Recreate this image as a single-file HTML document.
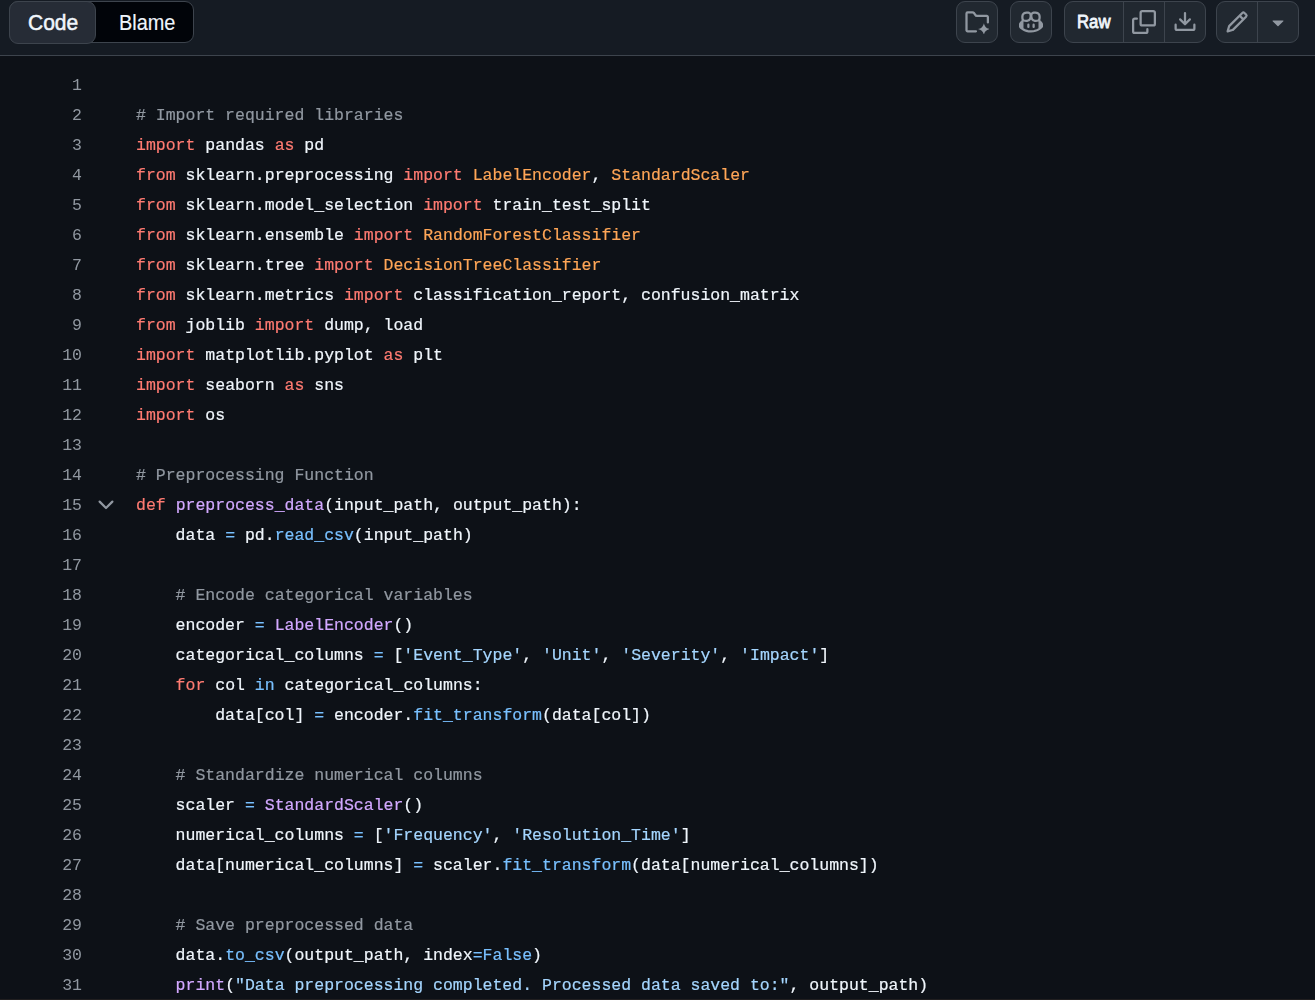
<!DOCTYPE html>
<html><head><meta charset="utf-8">
<style>
html,body{margin:0;padding:0;}
body{width:1315px;height:1000px;overflow:hidden;background:#0d1117;position:relative;font-family:"Liberation Sans",sans-serif;}
.hdr{position:absolute;left:0;top:0;width:1315px;height:55px;background:#151b23;}
.hline{position:absolute;left:0;top:55px;width:1315px;height:1px;background:#3d444d;}
.seg{position:absolute;left:9px;top:1px;width:183px;height:40px;border:1px solid #3d444d;border-radius:9px;background:#010409;}
.segcode{position:absolute;left:9px;top:1px;width:85px;height:41px;border:1px solid #3d444d;border-radius:9px;background:#262c36;box-sizing:border-box;width:87px;height:43px;}
.lbl{position:absolute;color:#f0f6fc;font-size:20px;line-height:20px;white-space:nowrap;}
.btn{position:absolute;top:1px;height:42px;border:1px solid #3d444d;border-radius:9px;background:#212830;box-sizing:border-box;}
.div{position:absolute;top:1px;width:1px;height:42px;background:#3d444d;}
svg{position:absolute;fill:#9198a1;}
.code{position:absolute;left:0;top:71px;font-family:"Liberation Mono",monospace;font-size:16.5px;line-height:30px;color:#f0f6fc;white-space:pre;}
.nums{position:absolute;left:0;width:82px;top:71px;font-family:"Liberation Mono",monospace;font-size:16.5px;line-height:30px;color:#9198a1;text-align:right;}
.codetxt{position:absolute;left:136px;top:71px;font-family:"Liberation Mono",monospace;font-size:16.5px;line-height:30px;color:#f0f6fc;}
.ln,.nr{height:30px;white-space:pre;}
.codetxt,.nums{will-change:transform;-webkit-font-smoothing:antialiased;}
.codetxt span,.codetxt .ln{-webkit-text-stroke:0.2px currentColor;}
.k{color:#ff7b72}.f{color:#d2a8ff}.c{color:#79c0ff}.s{color:#a5d6ff}.o{color:#ffa657}.m{color:#9198a1}
</style></head><body>
<div class="hdr"></div>
<div class="hline"></div>
<div class="seg"></div>
<div class="segcode"></div>
<div class="lbl" style="left:28px;top:13px;font-size:22px;-webkit-text-stroke:0.5px #f0f6fc;transform:scaleX(0.955);transform-origin:0 0;">Code</div>
<div class="lbl" style="left:119px;top:13px;font-size:22px;-webkit-text-stroke:0.15px #f0f6fc;transform:scaleX(0.905);transform-origin:0 0;">Blame</div>

<div class="btn" style="left:956px;width:42px;"></div>
<svg style="left:965px;top:10px" width="24" height="24" viewBox="0 0 16 16"><path fill="none" stroke="#9198a1" stroke-width="1.5" stroke-linecap="round" stroke-linejoin="round" d="M7.3 14.2H1.75a.75.75 0 0 1-.75-.75V2.3a.75.75 0 0 1 .75-.75H5Q5.6 1.55 5.95 2L6.75 3.1Q7.2 3.95 7.9 3.95H14.5a.75.75 0 0 1 .75.75V8.3"/><path d="M12.60 8.75Q13.22 12.03 16.50 12.65Q13.22 13.27 12.60 16.55Q11.98 13.27 8.70 12.65Q11.98 12.03 12.60 8.75Z"/></svg>

<div class="btn" style="left:1010px;width:42px;"></div>
<svg style="left:1019px;top:10px" width="24" height="24" viewBox="0 0 16 16"><path d="M7.998 15.035c-4.562 0-7.873-2.914-7.998-3.749V9.338c.085-.628.677-1.686 1.588-2.065.013-.07.024-.143.036-.218.029-.183.06-.384.126-.612-.201-.508-.254-1.084-.254-1.656 0-.87.128-1.769.693-2.484.579-.733 1.494-1.124 2.724-1.261 1.206-.134 2.262.034 2.944.765.05.053.096.108.139.165.044-.057.094-.112.143-.165.682-.731 1.738-.899 2.944-.765 1.230.137 2.145.528 2.724 1.261.566.715.693 1.614.693 2.484 0 .572-.053 1.148-.254 1.656.066.228.098.429.126.612.012.076.024.148.037.218.924.385 1.522 1.471 1.591 2.095v1.872c0 .766-3.351 3.795-8.002 3.795Zm0-1.485c2.28 0 4.584-1.11 5.002-1.433V7.862l-.023-.116c-.49.21-1.075.291-1.727.291-1.146 0-2.059-.327-2.710-.991A3.222 3.222 0 0 1 8 6.303a3.24 3.24 0 0 1-.544.743c-.65.664-1.563.991-2.710.991-.652 0-1.236-.081-1.727-.291l-.023.116v4.255c.419.323 2.722 1.433 5.002 1.433ZM6.762 2.83c-.193-.206-.637-.413-1.682-.297-1.019.113-1.479.404-1.713.7-.247.312-.369.789-.369 1.554 0 .793.129 1.171.308 1.371.162.181.519.379 1.442.379.853 0 1.339-.235 1.638-.54.315-.322.527-.827.617-1.553.117-.935-.037-1.395-.241-1.614Zm4.155-.297c-1.044-.116-1.488.091-1.681.297-.204.219-.359.679-.242 1.614.091.726.303 1.231.618 1.553.299.305.784.54 1.638.54.922 0 1.280-.198 1.442-.379.179-.2.308-.578.308-1.371 0-.765-.123-1.242-.370-1.554-.233-.296-.693-.587-1.713-.7Z"/><path d="M6.25 9.037a.75.75 0 0 1 .75.75v1.501a.75.75 0 0 1-1.5 0V9.787a.75.75 0 0 1 .75-.75Zm4.25.75v1.501a.75.75 0 0 1-1.5 0V9.787a.75.75 0 0 1 1.5 0Z"/></svg>

<div class="btn" style="left:1064px;width:142px;"></div>
<div class="div" style="left:1123px;"></div>
<div class="div" style="left:1164px;"></div>
<div class="lbl" style="left:1077px;top:12px;font-size:18px;-webkit-text-stroke:0.8px #f0f6fc;transform:scaleX(0.93);transform-origin:0 0;">Raw</div>
<svg style="left:1132px;top:10px" width="24" height="24" viewBox="0 0 16 16"><path d="M0 6.75C0 5.784.784 5 1.75 5h1.5a.75.75 0 0 1 0 1.5h-1.5a.25.25 0 0 0-.25.25v7.5c0 .138.112.25.25.25h7.5a.25.25 0 0 0 .25-.25v-1.5a.75.75 0 0 1 1.5 0v1.5A1.75 1.75 0 0 1 9.25 16h-7.5A1.75 1.75 0 0 1 0 14.25Z"/><path d="M5 1.75C5 .784 5.784 0 6.75 0h7.5C15.216 0 16 .784 16 1.75v7.5A1.75 1.75 0 0 1 14.25 11h-7.5A1.75 1.75 0 0 1 5 9.25Zm1.75-.25a.25.25 0 0 0-.25.25v7.5c0 .138.112.25.25.25h7.5a.25.25 0 0 0 .25-.25v-7.5a.25.25 0 0 0-.25-.25Z"/></svg>
<svg style="left:1173px;top:10px" width="24" height="24" viewBox="0 0 16 16"><path d="M2.75 14A1.75 1.75 0 0 1 1 12.25v-2.5a.75.75 0 0 1 1.5 0v2.5c0 .138.112.25.25.25h10.5a.25.25 0 0 0 .25-.25v-2.5a.75.75 0 0 1 1.5 0v2.5A1.75 1.75 0 0 1 13.25 14Z"/><path d="M7.25 7.689V2a.75.75 0 0 1 1.5 0v5.689l1.97-1.969a.749.749 0 1 1 1.06 1.060l-3.25 3.250a.749.749 0 0 1-1.060 0L4.220 6.780a.749.749 0 1 1 1.060-1.060l1.970 1.969Z"/></svg>

<div class="btn" style="left:1216px;width:83px;"></div>
<div class="div" style="left:1257px;"></div>
<svg style="left:1225px;top:10px" width="24" height="24" viewBox="0 0 16 16"><path d="M11.013 1.427a1.75 1.75 0 0 1 2.474 0l1.086 1.086a1.75 1.75 0 0 1 0 2.474l-8.61 8.61c-.21.21-.47.364-.756.445l-3.251.93a.75.75 0 0 1-.927-.928l.929-3.25c.081-.286.235-.547.445-.758l8.61-8.61Zm.176 4.823L9.75 4.81l-6.286 6.287a.253.253 0 0 0-.064.108l-.558 1.953 1.953-.558a.253.253 0 0 0 .108-.064Zm1.238-3.763a.25.25 0 0 0-.354 0L10.811 3.75l1.439 1.44 1.263-1.263a.25.25 0 0 0 0-.354Z"/></svg>
<svg style="left:1266px;top:10px" width="24" height="24" viewBox="0 0 16 16"><path d="m4.427 7.427 3.396 3.396a.25.25 0 0 0 .354 0l3.396-3.396A.25.25 0 0 0 11.396 7H4.604a.25.25 0 0 0-.177.427Z"/></svg>

<div class="nums">
<div class="nr">1</div>
<div class="nr">2</div>
<div class="nr">3</div>
<div class="nr">4</div>
<div class="nr">5</div>
<div class="nr">6</div>
<div class="nr">7</div>
<div class="nr">8</div>
<div class="nr">9</div>
<div class="nr">10</div>
<div class="nr">11</div>
<div class="nr">12</div>
<div class="nr">13</div>
<div class="nr">14</div>
<div class="nr">15</div>
<div class="nr">16</div>
<div class="nr">17</div>
<div class="nr">18</div>
<div class="nr">19</div>
<div class="nr">20</div>
<div class="nr">21</div>
<div class="nr">22</div>
<div class="nr">23</div>
<div class="nr">24</div>
<div class="nr">25</div>
<div class="nr">26</div>
<div class="nr">27</div>
<div class="nr">28</div>
<div class="nr">29</div>
<div class="nr">30</div>
<div class="nr">31</div>
</div>
<svg style="left:94px;top:493px" width="24" height="24" viewBox="0 0 16 16"><path d="M12.78 5.22a.749.749 0 0 1 0 1.060l-4.25 4.25a.749.749 0 0 1-1.060 0L3.220 6.280a.749.749 0 1 1 1.060-1.060L8 8.939l3.720-3.720a.749.749 0 0 1 1.060 0Z"/></svg>
<div class="codetxt">
<div class="ln"></div>
<div class="ln"><span class="m"># Import required libraries</span></div>
<div class="ln"><span class="k">import</span> pandas <span class="k">as</span> pd</div>
<div class="ln"><span class="k">from</span> sklearn.preprocessing <span class="k">import</span> <span class="o">LabelEncoder</span>, <span class="o">StandardScaler</span></div>
<div class="ln"><span class="k">from</span> sklearn.model_selection <span class="k">import</span> train_test_split</div>
<div class="ln"><span class="k">from</span> sklearn.ensemble <span class="k">import</span> <span class="o">RandomForestClassifier</span></div>
<div class="ln"><span class="k">from</span> sklearn.tree <span class="k">import</span> <span class="o">DecisionTreeClassifier</span></div>
<div class="ln"><span class="k">from</span> sklearn.metrics <span class="k">import</span> classification_report, confusion_matrix</div>
<div class="ln"><span class="k">from</span> joblib <span class="k">import</span> dump, load</div>
<div class="ln"><span class="k">import</span> matplotlib.pyplot <span class="k">as</span> plt</div>
<div class="ln"><span class="k">import</span> seaborn <span class="k">as</span> sns</div>
<div class="ln"><span class="k">import</span> os</div>
<div class="ln"></div>
<div class="ln"><span class="m"># Preprocessing Function</span></div>
<div class="ln"><span class="k">def</span> <span class="f">preprocess_data</span>(input_path, output_path):</div>
<div class="ln">    data <span class="c">=</span> pd.<span class="c">read_csv</span>(input_path)</div>
<div class="ln"></div>
<div class="ln">    <span class="m"># Encode categorical variables</span></div>
<div class="ln">    encoder <span class="c">=</span> <span class="f">LabelEncoder</span>()</div>
<div class="ln">    categorical_columns <span class="c">=</span> [<span class="s">&#x27;Event_Type&#x27;</span>, <span class="s">&#x27;Unit&#x27;</span>, <span class="s">&#x27;Severity&#x27;</span>, <span class="s">&#x27;Impact&#x27;</span>]</div>
<div class="ln">    <span class="k">for</span> col <span class="c">in</span> categorical_columns:</div>
<div class="ln">        data[col] <span class="c">=</span> encoder.<span class="c">fit_transform</span>(data[col])</div>
<div class="ln"></div>
<div class="ln">    <span class="m"># Standardize numerical columns</span></div>
<div class="ln">    scaler <span class="c">=</span> <span class="f">StandardScaler</span>()</div>
<div class="ln">    numerical_columns <span class="c">=</span> [<span class="s">&#x27;Frequency&#x27;</span>, <span class="s">&#x27;Resolution_Time&#x27;</span>]</div>
<div class="ln">    data[numerical_columns] <span class="c">=</span> scaler.<span class="c">fit_transform</span>(data[numerical_columns])</div>
<div class="ln"></div>
<div class="ln">    <span class="m"># Save preprocessed data</span></div>
<div class="ln">    data.<span class="c">to_csv</span>(output_path, index<span class="c">=</span><span class="c">False</span>)</div>
<div class="ln">    <span class="f">print</span>(<span class="s">&quot;Data preprocessing completed. Processed data saved to:&quot;</span>, output_path)</div>
</div>
<div style="position:absolute;left:0;top:999px;width:1315px;height:1px;background:#211f20;"></div>
</body></html>
